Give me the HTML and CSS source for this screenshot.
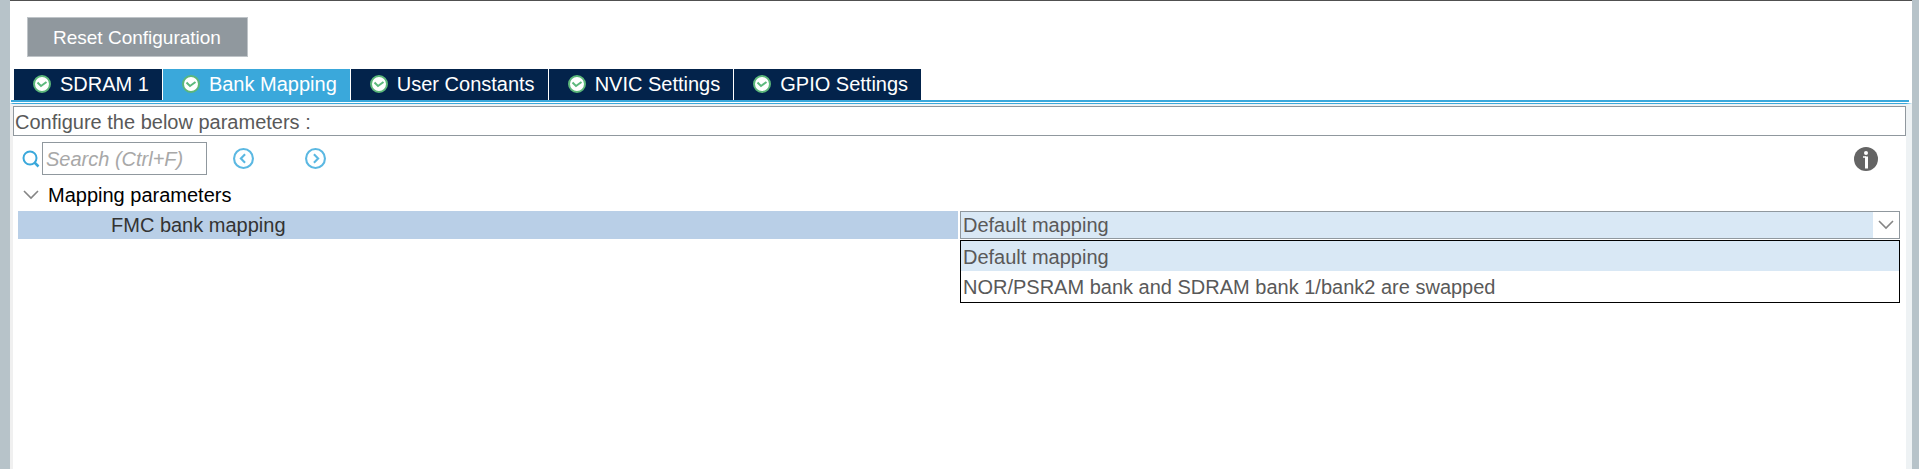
FILE: index.html
```html
<!DOCTYPE html>
<html lang="en">
<head>
  <meta charset="UTF-8">
  <title>FMC Configuration</title>
  <link rel="stylesheet" href="styles.css">
</head>
<body>

  <!-- Shared icons -->
  <svg class="icon-defs" aria-hidden="true">
    <symbol id="icon-check" viewBox="0 0 18 18">
      <circle cx="9" cy="9" r="8" fill="#fff" stroke="#5cb77a" stroke-width="2"/>
      <path d="M4.5 7.5L8 11l5.500-4" fill="none" stroke="#5cb97c" stroke-width="2"/>
    </symbol>
    <symbol id="icon-chevron" viewBox="0 0 16 10">
      <path d="M1 1l7 7 7-7" fill="none" stroke="#858585" stroke-width="1.6"/>
    </symbol>
  </svg>

  <main class="panel">
    <div class="toolbar">
      <button class="reset-button" type="button">Reset Configuration</button>
    </div>

    <div class="tabs" role="tablist">
      <button class="tab" type="button" role="tab" aria-selected="false"><svg class="check"><use href="#icon-check"/></svg>SDRAM 1</button>
      <button class="tab selected" type="button" role="tab" aria-selected="true"><svg class="check"><use href="#icon-check"/></svg>Bank Mapping</button>
      <button class="tab" type="button" role="tab" aria-selected="false"><svg class="check"><use href="#icon-check"/></svg>User Constants</button>
      <button class="tab" type="button" role="tab" aria-selected="false"><svg class="check"><use href="#icon-check"/></svg>NVIC Settings</button>
      <button class="tab" type="button" role="tab" aria-selected="false"><svg class="check"><use href="#icon-check"/></svg>GPIO Settings</button>
    </div>

    <section class="content">
      <p class="hint">Configure the below parameters :</p>

      <div class="search-bar">
        <label class="search-label" for="search" aria-label="Search">
          <svg class="search-icon" viewBox="0 0 18 18">
            <circle cx="8" cy="8" r="6.5" fill="none" stroke="#3aa8db" stroke-width="2"/>
            <path d="M12.5 12.5l4 4" stroke="#3aa8db" stroke-width="2.5"/>
          </svg>
        </label>
        <input class="search-input" id="search" type="text" placeholder="Search (Ctrl+F)">
        <button class="nav-button" type="button" aria-label="Previous">
          <svg viewBox="0 0 20 20"><circle cx="10" cy="10" r="9"/><path d="M11.5 6l-4 4 4 4"/></svg>
        </button>
        <button class="nav-button next" type="button" aria-label="Next">
          <svg viewBox="0 0 20 20"><circle cx="10" cy="10" r="9"/><path d="M8.5 6l4 4-4 4"/></svg>
        </button>
        <button class="info-button" type="button" aria-label="Information">
          <svg viewBox="0 0 24 24">
            <circle cx="12" cy="12" r="12" fill="#646464"/>
            <circle cx="12" cy="6" r="2" fill="#fff"/>
            <path d="M9 10h3" fill="none" stroke="#fff" stroke-width="1.5"/>
            <path d="M12.5 9.5v12" fill="none" stroke="#fff" stroke-width="3"/>
          </svg>
        </button>
      </div>

      <button class="group" type="button" aria-expanded="true">
        <svg class="chevron"><use href="#icon-chevron"/></svg>Mapping parameters
      </button>

      <div class="param-row">
        <label class="param-name" for="mapping">FMC bank mapping</label>
        <div class="param-value">
          <div class="select-wrap">
            <select class="mapping-select" id="mapping">
              <option>Default mapping</option>
              <option>NOR/PSRAM bank and SDRAM bank 1/bank2 are swapped</option>
            </select>
            <span class="select-arrow"><svg class="chevron"><use href="#icon-chevron"/></svg></span>
          </div>
          <ul class="options" role="listbox" aria-label="FMC bank mapping">
            <li class="option active" role="option" aria-selected="true">Default mapping</li>
            <li class="option" role="option" aria-selected="false">NOR/PSRAM bank and SDRAM bank 1/bank2 are swapped</li>
          </ul>
        </div>
      </div>
    </section>
  </main>

</body>
</html>
```
FILE: styles.css
```css
* {
  margin: 0;
  padding: 0;
  box-sizing: border-box;
}

body {
  display: flex;
  min-height: 100vh;
  padding: 0 7px 0 10px;
  background: #b7c3c9;
  font-family: "Liberation Sans", Arial, sans-serif;
  font-size: 20px;
  line-height: 28px;
  color: #595959;
}

button, input, select {
  font: inherit;
  color: inherit;
  border: none;
  border-radius: 0;
  background: none;
}

svg {
  display: block;
  flex-shrink: 0;
}

.icon-defs {
  position: absolute;
  width: 0;
  height: 0;
}

.panel {
  flex: 1;
  display: flex;
  flex-direction: column;
  min-width: 0;
  border-top: 1px solid #505050;
  background: #fff;
}

.toolbar {
  padding: 16px 17px 12px;
}

.reset-button {
  display: block;
  height: 40px;
  padding: 2px 26px 0 25px;
  border: 1px solid #bfc4c8;
  background: #90989e;
  color: #fff;
  font-size: 19px;
}

/* Tabs */
.tabs {
  display: flex;
  gap: 1px;
  margin: 0 3px 0 1px;
  padding-left: 3px;
  border-bottom: 2px solid #3aa8db;
}

.tab {
  display: flex;
  align-items: center;
  gap: 9px;
  height: 31px;
  padding: 0 13px 2px 19px;
  background: #03234b;
  color: #fff;
}

.tab.selected {
  background: #3aa8db;
}

.check {
  width: 18px;
  height: 18px;
}

/* Content */
.content {
  flex: 1;
  margin-top: 1px;
  border-top: 1px solid #3aa8db;
  border-left: 3px solid #f0f0f0;
  border-right: 6px solid #eef2f4;
}

.hint {
  margin-top: 2px;
  padding: 2px 0 0 1px;
  border: 1px solid #90989e;
  box-shadow: 0 -2px #f0f2f3;
  line-height: 26px;
}

.search-bar {
  display: flex;
  align-items: center;
  padding: 6px 28px 0 9px;
}

.search-icon {
  width: 18px;
  height: 18px;
}

.search-input {
  width: 165px;
  height: 33px;
  margin: 0 26px 0 2px;
  padding: 1px 3px 0;
  border: 1px solid #90989e;
}

.search-input::placeholder {
  color: #a8a8a8;
  font-style: italic;
}

.nav-button {
  width: 21px;
  height: 21px;
}

.nav-button svg {
  fill: none;
  stroke: #5bb8e2;
  stroke-width: 2;
}

.nav-button.next {
  margin-left: 51px;
}

.info-button {
  width: 24px;
  height: 24px;
  margin-left: auto;
}

/* Parameter tree */
.group {
  display: flex;
  align-items: center;
  gap: 9px;
  height: 36px;
  padding: 4px 0 0 10px;
  color: #000;
}

.chevron {
  width: 16px;
  height: 10px;
}

.param-row {
  display: grid;
  grid-template-columns: 1fr 1fr;
  gap: 2px;
  margin: 0 6px 0 5px;
}

.param-name {
  height: 28px;
  padding-left: 93px;
  background: #b9cfe7;
  color: #333;
}

.param-value {
  position: relative;
}

.select-wrap {
  display: flex;
  height: 28px;
  border: 1px solid #90989e;
}

.mapping-select {
  flex: 1;
  min-width: 0;
  padding-left: 2px;
  appearance: none;
  background: #d9e8f5;
  line-height: 26px;
}

.select-arrow {
  display: flex;
  align-items: center;
  justify-content: center;
  width: 26px;
}

/* Open drop-down list */
.options {
  position: absolute;
  top: 29px;
  left: 0;
  right: 0;
  padding-bottom: 1px;
  border: 1px solid #000;
  background: #fff;
  list-style: none;
}

.option {
  padding: 2px 2px 0;
  line-height: 28px;
}

.option.active {
  background: #d9e8f5;
}
```
